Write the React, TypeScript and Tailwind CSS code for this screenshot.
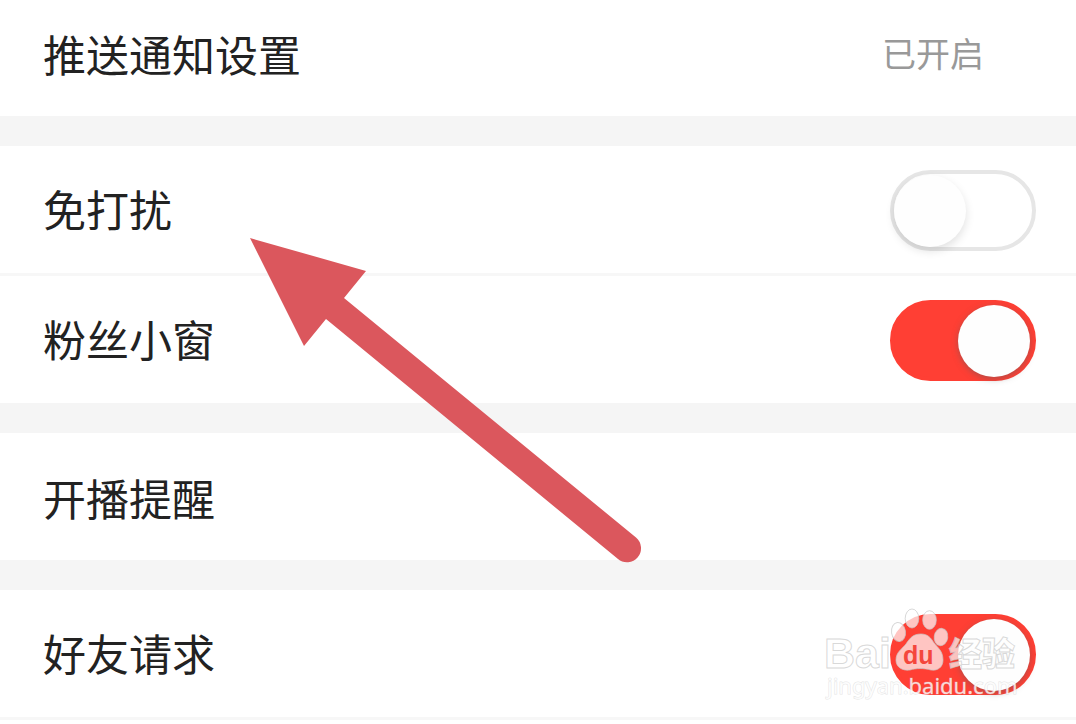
import { useState } from 'react';

type Item = {
  id: string;
  label: string;
  kind: 'link' | 'switch';
  value?: string;
  on?: boolean;
};

const GROUPS: Item[][] = [
  [{ id: 'push', label: '推送通知设置', kind: 'link', value: '已开启' }],
  [
    { id: 'dnd', label: '免打扰', kind: 'switch', on: false },
    { id: 'fans', label: '粉丝小窗', kind: 'switch', on: true },
  ],
  [{ id: 'live', label: '开播提醒', kind: 'link' }],
  [{ id: 'friend', label: '好友请求', kind: 'switch', on: true }],
];

function Label({ children }: { children: string }) {
  return <span className="pt-1 text-[43px] leading-[77px] text-[#222]">{children}</span>;
}

function LinkRow({ item }: { item: Item }) {
  return (
    <button type="button" className="flex w-full items-center justify-between pt-[26px] pr-10 pb-5 pl-[43px]">
      <Label>{item.label}</Label>
      {item.value && (
        <span className="mr-[52px] text-[34px] leading-[81px] text-[#999]">{item.value}</span>
      )}
    </button>
  );
}

function SwitchRow({ item }: { item: Item }) {
  const [on, setOn] = useState(Boolean(item.on));

  return (
    <label
      htmlFor={item.id}
      className="flex w-full items-center justify-between pt-6 pr-10 pb-[22px] pl-[43px]"
    >
      <Label>{item.label}</Label>
      <input
        id={item.id}
        type="checkbox"
        role="switch"
        checked={on}
        onChange={(e) => setOn(e.target.checked)}
        className="flex h-[81px] w-[146px] shrink-0 appearance-none items-center rounded-full border-4 border-[#e6e6e6] bg-white before:size-[72px] before:rounded-full before:bg-[#fefefe] before:shadow-[0_4px_10px_rgba(0,0,0,0.12)] checked:justify-end checked:border-[#ff3f34] checked:bg-[#ff3f34] checked:pr-[2px] checked:before:shadow-[0_2px_6px_rgba(100,90,90,0.5)]"
      />
    </label>
  );
}

function Arrow() {
  return (
    <svg
      className="pointer-events-none absolute top-[238px] left-[250px]"
      width="392"
      height="326"
      viewBox="0 0 392 326"
      fill="#db575d"
      aria-hidden="true"
    >
      <path d="M0 0 116 33 94 60 386 299.500A14 14 0 0 1 368 321L76 81 54 108Z" />
    </svg>
  );
}

function Watermark() {
  return (
    <svg
      className="pointer-events-none absolute top-[606px] right-[52px]"
      width="200"
      height="98"
      viewBox="0 0 200 98"
    >
      <g fill="#fff" fillOpacity="0.7" stroke="#c8c8c8" strokeOpacity="0.7" strokeWidth="1">
        <text x="0" y="62" fontSize="43" fontWeight="700" fontFamily="'Liberation Sans', sans-serif">
          Bai
        </text>
        <text
          x="125"
          y="60"
          fontSize="33"
          fontWeight="900"
          fontFamily="'Liberation Sans', 'Noto Sans CJK SC', sans-serif"
        >
          经验
        </text>
        <ellipse cx="88" cy="12.500" rx="6.800" ry="9.500" />
        <ellipse cx="105.500" cy="14" rx="6.800" ry="9.300" />
        <ellipse cx="74.500" cy="26" rx="7" ry="9.500" transform="rotate(-8 74.500 26)" />
        <ellipse cx="117" cy="31" rx="6.800" ry="8.700" transform="rotate(8 117 31)" />
        <path d="M97 28C104 28 107 32 110 37C114 42 119 45 119 54C119 61 114 65 107 64C100 62 92 62 86 64C78 65 72 61 72 54C72 46 78 43 82 38C86 32 89 28 97 28Z" />
      </g>
      <text
        x="79"
        y="58"
        fontSize="25"
        fontWeight="700"
        fill="#f4463c"
        fontFamily="'Liberation Sans', sans-serif"
      >
        du
      </text>
      <text
        x="3"
        y="88"
        fontSize="22"
        fill="#fff"
        fillOpacity="0.8"
        stroke="#bbb"
        strokeOpacity="0.4"
        strokeWidth="1"
        paintOrder="stroke"
        fontFamily="'Noto Sans', sans-serif"
      >
        jingyan.baidu.com
      </text>
    </svg>
  );
}

export default function App() {
  return (
    <main className="relative min-h-screen overflow-hidden bg-white font-['Liberation_Sans','Noto_Sans_CJK_SC',sans-serif]">
      {/* the list is scrolled slightly, so the first row starts above the top edge */}
      <div className="-mt-[11px] flex flex-col gap-[30px] bg-[#f5f5f5]">
        {GROUPS.map((group) => (
          <section
            key={group[0].id}
            className="divide-y-3 divide-[#f7f7f7] bg-white last:border-b-3 last:border-[#f7f7f7]"
          >
            {group.map((item) =>
              item.kind === 'switch' ? (
                <SwitchRow key={item.id} item={item} />
              ) : (
                <LinkRow key={item.id} item={item} />
              ),
            )}
          </section>
        ))}
      </div>
      <Arrow />
      <Watermark />
    </main>
  );
}
